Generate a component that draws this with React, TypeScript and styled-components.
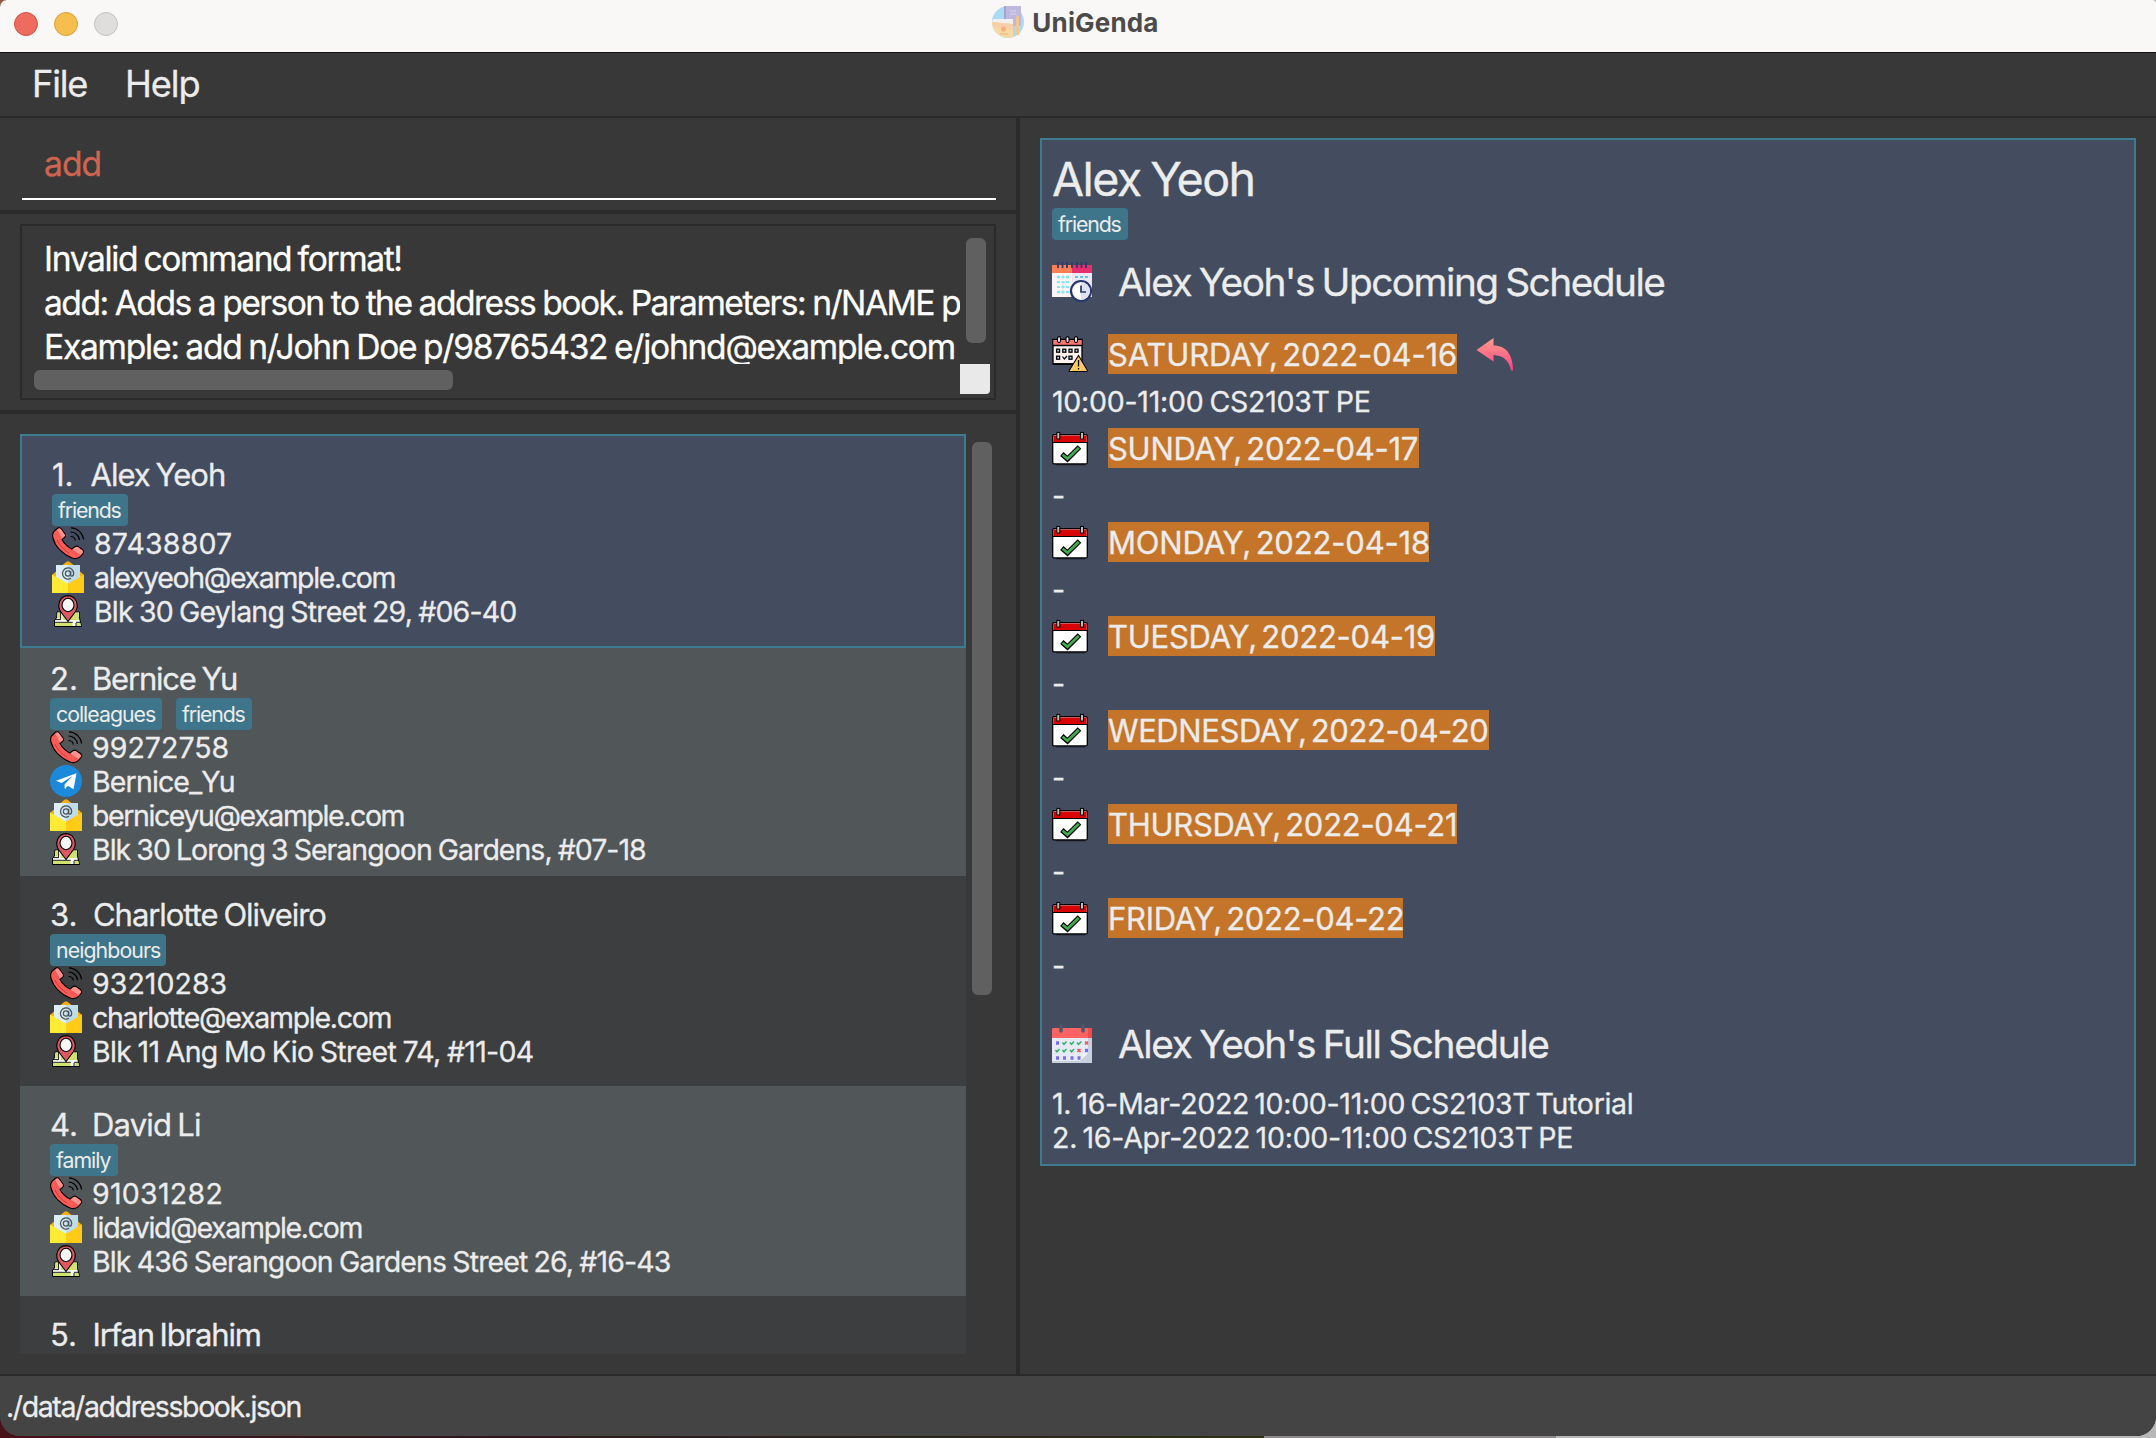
import React from "react";
import styled, { createGlobalStyle } from "styled-components";

const color = {
  window: "#383838",
  divider: "#2a2a2a",
  status: "#444444",
  thumb: "#606060",
  selected: "#434d5f",
  accent: "#3e7b91",
  tag: "#3f758a",
  even: "#3c3e3f",
  odd: "#515658",
  day: "#c57529",
  text: "#ececec",
};

const GlobalStyle = createGlobalStyle`
  * { box-sizing: border-box; }
  body {
    margin: 0;
    font-family: Inter, "Liberation Sans", sans-serif;
    color: ${color.text};
    -webkit-text-stroke: 0.3px currentColor;
  }
`;

/* ---------- shell ---------- */

const Desktop = styled.div`
  width: 2156px;
  height: 1438px;
  overflow: hidden;
  background:
    linear-gradient(90deg, #8f5a40 0 50px, transparent 50px) 0 0 / 100% 20px no-repeat,
    linear-gradient(90deg, #471218 0, #2c1a1a 500px, #2e2d1a 1264px, #8b8989 1264px, #8b8989 1556px, #b9b8b8 1556px);
`;

const Window = styled.div`
  display: flex;
  flex-direction: column;
  height: 1436px;
  overflow: hidden;
  background: ${color.window};
  border-radius: 7px 3px 20px 20px;
`;

const TitleBar = styled.header`
  display: grid;
  grid-template-columns: 1fr auto 1fr;
  align-items: start;
  height: 53px;
  flex: none;
  background: #f9f8f6;
  border-bottom: 1px solid #111;
`;

const Lights = styled.div`
  display: flex;
  gap: 16px;
  padding: 12px 0 0 14px;
`;

const Light = styled.span<{ $fill: string; $edge: string }>`
  width: 24px;
  height: 24px;
  border-radius: 50%;
  background: ${(p) => p.$fill};
  border: 1px solid ${(p) => p.$edge};
`;

const AppTitle = styled.div`
  display: flex;
  gap: 8px;
  padding: 6px 5px 0 0;
  height: 52px;
`;

const Spaced = styled.span<{ $track: number; $word: number }>`
  white-space: pre;
  letter-spacing: ${(p) => p.$track}px;
  word-spacing: ${(p) => p.$word}px;
`;

/* Narrows the word gaps and hands the saved width back to the letters. */
const Label = ({ track, gap = 1.8, children }: { track: number; gap?: number; children: string }) => {
  const spaces = children.split(" ").length - 1;
  const spread = (spaces * gap) / Math.max(1, children.length - 1);
  return <Spaced $track={track + spread} $word={-gap}>{children}</Spaced>;
};

const TitleText = styled.span`
  font-size: 26px;
  font-weight: 700;
  line-height: 34px;
  letter-spacing: 0.17px;
  color: #4b4b4b;
  -webkit-text-stroke: 0;
`;

const MenuBar = styled.nav`
  display: flex;
  gap: 38px;
  height: 65px;
  flex: none;
  padding-left: 32px;
  border-bottom: 2px solid ${color.divider};
`;

const MenuItem = styled.span<{ $track: number }>`
  font-size: 36.2px;
  line-height: 62px;
  letter-spacing: ${(p) => p.$track}px;
`;

const Body = styled.div`
  display: grid;
  grid-template-columns: 1016px 4px 1fr;
  height: 1256px;
  flex: none;
`;

const Left = styled.section`
  display: flex;
  flex-direction: column;
  min-width: 0;
`;

const Splitter = styled.div`
  background: ${color.divider};
`;

const StatusBar = styled.footer`
  flex: 1;
  padding-left: 6px;
  background: ${color.status};
  border-top: 2px solid ${color.divider};
  border-bottom: 1px solid #666;
  font-size: 28.5px;
  line-height: 62px;
`;

/* ---------- command area ---------- */

const CommandPane = styled.div`
  height: 96px;
  flex: none;
  padding: 0 20px 10px 22px;
  border-bottom: 4px solid ${color.divider};
`;

const CommandField = styled.div`
  height: 82px;
  padding-left: 22px;
  border-bottom: 2px solid #fff;
  color: #cf6550;
  font-size: 33.6px;
  line-height: 91px;
`;

const ResultPane = styled.div`
  height: 200px;
  flex: none;
  padding: 10px 20px;
  border-bottom: 4px solid ${color.divider};
`;

const ResultBox = styled.div`
  display: grid;
  grid-template-columns: 1fr 30px;
  grid-template-rows: 1fr 30px;
  height: 176px;
  padding: 0 4px 4px 4px;
  border: 2px solid ${color.divider};
`;

const ResultText = styled.div`
  overflow: hidden;
  min-width: 0;
  padding: 11px 0 0 18px;
  color: #fff;
  font-size: 33.6px;
  line-height: 44px;
`;

const Line = styled.div`
  white-space: nowrap;
  height: 44px;
`;

const Corner = styled.div`
  background: #e9e9e9;
  border-bottom-right-radius: 4px;
`;

const Track = styled.div<{ $pad: string }>`
  padding: ${(p) => p.$pad};
`;

const Thumb = styled.div<{ $w: number; $h: number }>`
  width: ${(p) => p.$w}px;
  height: ${(p) => p.$h}px;
  border-radius: 6px;
  background: ${color.thumb};
`;

/* ---------- person list ---------- */

const ListPane = styled.div`
  display: flex;
  height: 940px;
  margin: 20px 0 0 20px;
`;

const List = styled.div`
  width: 946px;
  height: 920px;
  overflow: hidden;
`;

const Card = styled.article<{ $bg: string; $pad: number; $selected?: boolean }>`
  padding: ${(p) => p.$pad}px 0 ${(p) => p.$pad}px 30px;
  background: ${(p) => p.$bg};
  border: ${(p) => (p.$selected ? `2px solid ${color.accent}` : "none")};
`;

const NameRow = styled.div`
  display: flex;
  height: 40px;
  font-size: 31px;
  line-height: 42px;
`;

const Index = styled.span<{ $w: number }>`
  width: ${(p) => p.$w}px;
`;

const Tags = styled.div`
  display: flex;
  gap: 14px;
`;

const Tag = styled.span<{ $track: number; $w: number }>`
  width: ${(p) => p.$w}px;
  height: 32px;
  padding-left: 6px;
  border-radius: 4px;
  background: ${color.tag};
  font-size: 21.3px;
  line-height: 32px;
  letter-spacing: ${(p) => p.$track}px;
  white-space: nowrap;
  -webkit-text-stroke: 0;
`;

const Field = styled.div`
  display: flex;
  align-items: flex-start;
  gap: 10px;
  height: 34px;
  font-size: 28.5px;
  line-height: 36px;

  svg {
    margin-top: 1px;
  }
`;

/* ---------- schedule ---------- */

const Right = styled.section`
  padding: 20px;
`;

const Schedule = styled.article`
  height: 1028px;
  padding: 10px;
  background: ${color.selected};
  border: 2px solid ${color.accent};
`;

const Heading = styled.h1`
  margin: 0;
  height: 58px;
  font-weight: 400;
  font-size: 46.6px;
  line-height: 58px;
`;

const Section = styled.h2<{ $top: number }>`
  display: flex;
  align-items: center;
  gap: 26px;
  margin: ${(p) => p.$top}px 0 0;
  height: 40px;
  font-weight: 400;
  font-size: 38.8px;
  line-height: 40px;
`;

const Days = styled.div`
  display: flex;
  flex-direction: column;
  gap: 14px;
  margin-top: 32px;
`;

const DayRow = styled.div`
  display: flex;
  align-items: center;
  height: 40px;
  gap: 20px;
`;

const DayLabel = styled.span<{ $w: number }>`
  width: ${(p) => p.$w}px;
  height: 40px;
  background: ${color.day};
  font-size: 31px;
  line-height: 41px;
  white-space: nowrap;
`;

const Slot = styled.div`
  height: 40px;
  font-size: 28.5px;
  line-height: 56px;
`;

const DayBlock = styled.div`
  display: flex;
  flex-direction: column;
`;

const Events = styled.div`
  margin-top: 23px;
  font-size: 28.5px;
  line-height: 34px;
`;

const Event = styled.div`
  height: 34px;
`;

/* ---------- icons ---------- */

const Icon = styled.svg`
  display: block;
  flex: none;
  overflow: visible;
`;

const Logo = () => (
  <Icon width="32" height="32" viewBox="0 0 32 32">
    <circle cx="16" cy="16" r="16" fill="#a9dcf3" />
    <path d="M12 0H29V20H12Z" fill="#bdb8dc" />
    <path d="M12 0H14V20H12Z" fill="#a6a1d0" />
    <path d="M18 5h6M18 8h6" stroke="#d9d6ec" strokeWidth="1" />
    <path d="M0 16C1 13 1 13 4 13H21V18H1Z" fill="#f2f0ee" />
    <path d="M0 16L21 18V31A16 16 0 0 1 0 16Z" fill="#f8d9a0" />
    <path d="M0 16L21 18V24L1 21Z" fill="#f8cfa8" />
    <circle cx="11.500" cy="23" r="2.500" fill="#f3ac83" />
    <path d="M8 28h8" stroke="#f0bd8c" strokeWidth="1.500" />
    <path d="M24 11L25.500 8L27 11V29H24Z" fill="#f6c48f" />
  </Icon>
);

const Phone = () => (
  <Icon width="32" height="32" viewBox="0 0 32 32">
    <path
      d="M4 2.500C6 .5 8 .2 9 1.500L13 7C14 8.500 13.500 9.500 12.500 10.500L10 12.500C12 16.500 16 20 20 22L22.500 20C23.500 19 25 19 26 19.500L30.500 22.500C32 24 31.800 25.500 31 26.500C28 31 24 32.500 20 31C10 27 3 19 .8 10.500C0 7 2 4 4 2.500Z"
      fill="#fe5a56"
      stroke="#000"
      strokeWidth="1.100"
    />
    <path d="M5.500 3C7 1.200 8 1.200 8.800 2.200L12.500 7.200C13 8.200 12.800 9 12 9.800L9.800 11.500Z" fill="#ff938f" />
    <path d="M20.500 22.400L23 20.500C24 19.800 25 19.800 25.800 20.200L30 23.200C31 24 31 25 30.400 26L28.500 28Z" fill="#ff938f" />
    <path d="M5 13C7 18 12 23 17 26" stroke="#c93a3a" fill="none" />
    <g fill="none" stroke="#000" strokeWidth="1.200">
      <path d="M19 .8C25 .8 31 6 31.500 12.500" />
      <path d="M18.500 5C23 5 27 8.500 27.500 13" />
      <path d="M18.500 9.500C21 9.500 23 11 23.300 13.500" />
    </g>
  </Icon>
);

const Mail = () => (
  <Icon width="32" height="32" viewBox="0 0 32 32">
    <path d="M10 4.500L14.500 .8Q16 -.3 17.500 .8L22 4.500Z" fill="#f9ac06" />
    <path d="M0 14L4 10.500V20ZM32 14L28 10.500V20Z" fill="#f9b306" />
    <path d="M4 4H16V24L4 17Z" fill="#dceff6" />
    <path d="M16 4H28V17L16 24Z" fill="#bfdde8" />
    <path d="M0 13.500L13 21Q16 22.500 16 22.500V32H0Z" fill="#ffeb34" />
    <path d="M32 13.500L19 21Q16 22.500 16 22.500V32H32Z" fill="#ffcb16" />
    <g fill="none" stroke="#4c565c" strokeWidth="1.300">
      <circle cx="16" cy="12.500" r="2.600" />
      <path d="M18.600 10V13.800Q18.800 15.300 20 15.200Q21.700 14.500 21.700 12.500A5.600 5.600 0 1 0 19 17.300" />
    </g>
  </Icon>
);

const Pin = () => (
  <Icon width="32" height="32" viewBox="0 0 32 32">
    <path d="M5 17H27.500V23L29.500 31.500H2.500V25L4.500 23Z" fill="#fff" stroke="#000" />
    <path d="M5.500 17.500H8V23.500H5ZM10.500 18H22L27 17.500V25H10.500ZM3 28H20.500V31H3ZM24.500 28H28.500V31H24.500Z" fill="#cfe36c" />
    <path d="M3 27.300H20.800M24 27.300H28.500M8.600 17V24M3 24.600H9M24 28V31" stroke="#000" strokeWidth=".9" />
    <path
      d="M16 26.500L8.500 16.500C5 11 7 1 16 .6C25 1 27 11 23.500 16.500Z"
      fill="#dd5864"
      stroke="#000"
      strokeWidth="1.100"
    />
    <ellipse cx="16" cy="10" rx="6" ry="6.700" fill="#f7f7f7" stroke="#000" strokeWidth="1.100" />
  </Icon>
);

const Telegram = () => (
  <Icon width="32" height="32" viewBox="0 0 32 32">
    <circle cx="16" cy="16" r="16" fill="#1c8adb" />
    <path d="M26.500 8.200L6 15.800L11.500 18L22.500 11L14.500 19.500L14.800 24.200L17.800 20.800L23.500 24.300Z" fill="#fff" />
  </Icon>
);

const UpcomingIcon = () => (
  <Icon width="40" height="40" viewBox="0 0 40 40">
    <path d="M0 3H20V11H0Z" fill="#ff8052" />
    <path d="M20 3H40V11H20Z" fill="#e62f6d" />
    <path d="M0 11H20V35H0Z" fill="#fff5f4" />
    <path d="M20 11H40V35H20Z" fill="#ece7f5" />
    <path d="M6 0V6M10.500 0V6M15 0V6M20 0V6M25 0V6M29.500 0V6M34 0V6" stroke="#2f3a6c" strokeWidth="1.800" />
    <path
      d="M5 15H8M9.500 15H12.500M14 15H17M5 20H8M9.500 20H12.500M14 20H17M5 25H8M9.500 25H12.500M14 25H17M5 30H8M9.500 30H12.500M14 30H17M6.500 13.500V16.500M11 13.500V16.500M15.500 13.500V16.500M11 23.500V26.500M11 28.500V31.500"
      stroke="#86e6f7"
      strokeWidth="1.800"
    />
    <path d="M23 15H26M28 15H31M33 15H36M23 20H26" stroke="#5cc8ee" strokeWidth="2" />
    <circle cx="29" cy="29" r="10" fill="#fff" stroke="#27376c" strokeWidth="2.200" />
    <path d="M29 20A9 9 0 0 1 29 38Z" fill="#dfe0f0" />
    <path d="M29 23.500V30H34" fill="none" stroke="#27376c" strokeWidth="1.700" />
  </Icon>
);

const BusyDayIcon = () => (
  <Icon width="36" height="36" viewBox="0 0 36 36">
    <path d="M1 3.500H30V28H1Z" fill="#fff4ef" stroke="#000" strokeWidth="1.300" />
    <path d="M1.500 4H29.500V9H1.500Z" fill="#ff7470" />
    <path d="M1 9.500H30M1.500 28H28" stroke="#000" strokeWidth="1.300" />
    <g fill="#e4e9ee" stroke="#000" strokeWidth="1.100">
      <rect x="5.500" y=".6" width="3" height="6" rx="1.500" />
      <rect x="14" y=".6" width="3" height="6" rx="1.500" />
      <rect x="22.500" y=".6" width="3" height="6" rx="1.500" />
    </g>
    <g fill="#bcd6ee" stroke="#000" strokeWidth="1.300">
      <rect x="4.600" y="13.200" width="3" height="3" />
      <rect x="10.800" y="13.200" width="3" height="3" />
      <rect x="17" y="13.200" width="3" height="3" />
      <rect x="23" y="13.200" width="3" height="3" />
      <rect x="4.600" y="20.200" width="3" height="3" />
      <rect x="17" y="20.200" width="3" height="3" />
    </g>
    <path d="M10.500 20.500L12.300 23L15 20" fill="none" stroke="#000" strokeWidth="1.200" />
    <path d="M26.500 19.500L35.500 34.500Q35.500 35.500 34.500 35.500H18Q17 35.500 17.200 34.500Z" fill="#ffc963" stroke="#000" strokeWidth="1.100" />
    <path d="M26.500 24V30.500M26.500 32V33.500" stroke="#000" strokeWidth="1.300" />
  </Icon>
);

const FreeDayIcon = () => (
  <Icon width="36" height="36" viewBox="0 0 36 36">
    <path d="M4 34.700H33" stroke="#252b36" strokeWidth="1.400" />
    <rect x=".7" y="4.700" width="34.600" height="29.200" rx="1.500" fill="#fff" stroke="#000" strokeWidth="1.300" />
    <path d="M1.400 5.400H34.600V12H1.400Z" fill="#d90202" />
    <path d="M1 12.500H35" stroke="#000" strokeWidth="1.200" />
    <g fill="#b9bcc0" stroke="#000" strokeWidth="1">
      <rect x="4.800" y="2.400" width="3" height="6.600" />
      <rect x="28.500" y="2.400" width="3" height="6.600" />
    </g>
    <path d="M9.800 24L15.500 29L27.500 17" fill="none" stroke="#000" strokeWidth="5" />
    <path d="M10.600 24.700L15.500 28.800L26.800 17.700" fill="none" stroke="#43ad4d" strokeWidth="2.700" />
  </Icon>
);

const FullIcon = () => (
  <Icon width="40" height="40" viewBox="0 0 40 40">
    <path d="M0 14H40V39H0Z" fill="#e6eaf5" />
    <path d="M36 14H40V39H0V37H28L36 29Z" fill="#c8d0de" />
    <path d="M28 37V34L33 29H36Z" fill="#f4f6fb" />
    <path d="M0 14V5.500Q0 4 1.500 4H38.500Q40 4 40 5.500V14Z" fill="#ff6262" />
    <path d="M36 4H38.500Q40 4 40 5.500V14H36Z" fill="#f14a4a" />
    <path d="M9 2V7M31 2V7" stroke="#4e5a69" strokeWidth="3.600" strokeLinecap="round" />
    <path d="M4 19H7M33 26.500H36M4 34H7M11 34H14M18.500 34H21.500M25.500 34H28.500" stroke="#7b6cf6" strokeWidth="3.400" />
    <path
      d="M10.500 18.500L12 20.300L14.500 17.500M18 18.500L19.500 20.300L22 17.500M25 18.500L26.500 20.300L29.500 17.500M3.500 26L5 27.800L7.500 25M10.500 26L12 27.800L14.500 25M18 26L19.500 27.800L22 25"
      fill="none"
      stroke="#35b06c"
      strokeWidth="1.500"
    />
    <path d="M33 17.500L36 20.500M36 17.500L33 20.500M25.500 25L28.500 28M28.500 25L25.500 28" stroke="#f4504f" strokeWidth="1.500" />
  </Icon>
);

const ReplyIcon = () => (
  <Icon width="36" height="36" viewBox="0 0 36 36">
    <defs>
      <linearGradient id="reply" x1="0" y1="0" x2="0" y2="1">
        <stop offset="0" stopColor="#ff9f8c" />
        <stop offset="1" stopColor="#ff3f83" />
      </linearGradient>
    </defs>
    <path d="M-.5 14L16.500 2V9.500C28.500 9.500 36 18 36 34.500H34C32.500 25 26.500 19.500 16.500 19V25.500Z" fill="url(#reply)" />
  </Icon>
);

/* ---------- data ---------- */

type Kind = "phone" | "telegram" | "mail" | "pin";
const icons: Record<Kind, React.FC> = { phone: Phone, telegram: Telegram, mail: Mail, pin: Pin };

interface Person {
  name: [string, number];
  index: [string, number];
  tags: [string, number, number][];
  fields: [Kind, string, number][];
}

const people: Person[] = [
  {
    name: ["Alex Yeoh", -1.23],
    index: ["1.", 38.5],
    tags: [["friends", -1.15, 76]],
    fields: [
      ["phone", "87438807", 0.18],
      ["mail", "alexyeoh@example.com", -1.34],
      ["pin", "Blk 30 Geylang Street 29, #06-40", -0.98],
    ],
  },
  {
    name: ["Bernice Yu", -1.4],
    index: ["2.", 42],
    tags: [["colleagues", -0.99, 112], ["friends", -1.15, 76]],
    fields: [
      ["phone", "99272758", 0.03],
      ["telegram", "Bernice_Yu", -0.85],
      ["mail", "berniceyu@example.com", -1.41],
      ["pin", "Blk 30 Lorong 3 Serangoon Gardens, #07-18", -1.13],
    ],
  },
  {
    name: ["Charlotte Oliveiro", -1.15],
    index: ["3.", 43],
    tags: [["neighbours", -0.91, 116]],
    fields: [
      ["phone", "93210283", 0.05],
      ["mail", "charlotte@example.com", -1.28],
      ["pin", "Blk 11 Ang Mo Kio Street 74, #11-04", -0.88],
    ],
  },
  {
    name: ["David Li", -1.06],
    index: ["4.", 42],
    tags: [["family", -1.02, 68]],
    fields: [
      ["phone", "91031282", 0.28],
      ["mail", "lidavid@example.com", -1.29],
      ["pin", "Blk 436 Serangoon Gardens Street 26, #16-43", -1.03],
    ],
  },
  { name: ["Irfan Ibrahim", -1.32], index: ["5.", 42.5], tags: [], fields: [] },
];

const days: { label: string; track: number; width: number; slot: string }[] = [
  { label: "SATURDAY, 2022-04-16", track: -0.35, width: 349, slot: "10:00-11:00 CS2103T PE" },
  { label: "SUNDAY, 2022-04-17", track: -0.5, width: 311, slot: "-" },
  { label: "MONDAY, 2022-04-18", track: -0.42, width: 321, slot: "-" },
  { label: "TUESDAY, 2022-04-19", track: -0.48, width: 327, slot: "-" },
  { label: "WEDNESDAY, 2022-04-20", track: -0.62, width: 381, slot: "-" },
  { label: "THURSDAY, 2022-04-21", track: -0.49, width: 349, slot: "-" },
  { label: "FRIDAY, 2022-04-22", track: -0.54, width: 295, slot: "-" },
];

const PersonCard = ({ person, position }: { person: Person; position: number }) => {
  const selected = position === 0;
  const bg = selected ? color.selected : position % 2 ? color.odd : color.even;
  return (
    <Card $bg={bg} $pad={person.fields.length > 3 ? 10 : 18} $selected={selected}>
      <NameRow>
        <Index $w={person.index[1]}>{person.index[0]}</Index>
        <Label track={person.name[1]}>{person.name[0]}</Label>
      </NameRow>
      <Tags>
        {person.tags.map(([label, track, width]) => (
          <Tag key={label} $track={track} $w={width}>{label}</Tag>
        ))}
      </Tags>
      {person.fields.map(([kind, value, track]) => {
        const Glyph = icons[kind];
        return (
          <Field key={kind}>
            <Glyph />
            <Label track={track} gap={1}>{value}</Label>
          </Field>
        );
      })}
    </Card>
  );
};

export default function App() {
  return (
    <Desktop>
      <GlobalStyle />
      <Window>
        <TitleBar>
          <Lights>
            <Light $fill="#ed6b5f" $edge="#d45549" />
            <Light $fill="#f5be4f" $edge="#d9a13b" />
            <Light $fill="#dfdedd" $edge="#c4c3c2" />
          </Lights>
          <AppTitle>
            <Logo />
            <TitleText>UniGenda</TitleText>
          </AppTitle>
        </TitleBar>
        <MenuBar>
          <MenuItem $track={-1.23}>File</MenuItem>
          <MenuItem $track={-1.1}>Help</MenuItem>
        </MenuBar>
        <Body>
          <Left>
            <CommandPane>
              <CommandField>
                <Label track={-0.9}>add</Label>
              </CommandField>
            </CommandPane>
            <ResultPane>
              <ResultBox>
                <ResultText>
                  <Line><Label track={-1.53}>Invalid command format!</Label></Line>
                  <Line><Label track={-1.65} gap={0.8}>add: Adds a person to the address book. Parameters: n/NAME p/</Label></Line>
                  <Line><Label track={-1.4} gap={1.5}>Example: add n/John Doe p/98765432 e/johnd@example.com</Label></Line>
                </ResultText>
                <Track $pad="12px 0 0 6px"><Thumb $w={20} $h={105} /></Track>
                <Track $pad="6px 0 0 8px"><Thumb $w={419} $h={20} /></Track>
                <Corner />
              </ResultBox>
            </ResultPane>
            <ListPane>
              <List>
                {people.map((person, i) => (
                  <PersonCard key={person.name[0]} person={person} position={i} />
                ))}
              </List>
              <Track $pad="8px 0 0 6px"><Thumb $w={20} $h={553} /></Track>
            </ListPane>
          </Left>
          <Splitter />
          <Right>
            <Schedule>
              <Heading><Label track={-1.85}>Alex Yeoh</Label></Heading>
              <Tags><Tag $track={-1.15} $w={76}>friends</Tag></Tags>
              <Section $top={22}>
                <UpcomingIcon />
                <Label track={-1.7}>Alex Yeoh's Upcoming Schedule</Label>
              </Section>
              <Days>
                {days.map((day, i) => (
                  <DayBlock key={day.label}>
                    <DayRow>
                      {i === 0 ? <BusyDayIcon /> : <FreeDayIcon />}
                      <DayLabel $w={day.width}><Label track={day.track} gap={4}>{day.label}</Label></DayLabel>
                      {i === 0 && <ReplyIcon />}
                    </DayRow>
                    <Slot><Label track={-0.42}>{day.slot}</Label></Slot>
                  </DayBlock>
                ))}
              </Days>
              <Section $top={46}>
                <FullIcon />
                <Label track={-1.62}>Alex Yeoh's Full Schedule</Label>
              </Section>
              <Events>
                <Event><Label track={-0.54} gap={2.5}>1. 16-Mar-2022 10:00-11:00 CS2103T Tutorial</Label></Event>
                <Event><Label track={-0.51} gap={2.5}>2. 16-Apr-2022 10:00-11:00 CS2103T PE</Label></Event>
              </Events>
            </Schedule>
          </Right>
        </Body>
        <StatusBar><Label track={-1.39}>./data/addressbook.json</Label></StatusBar>
      </Window>
    </Desktop>
  );
}
